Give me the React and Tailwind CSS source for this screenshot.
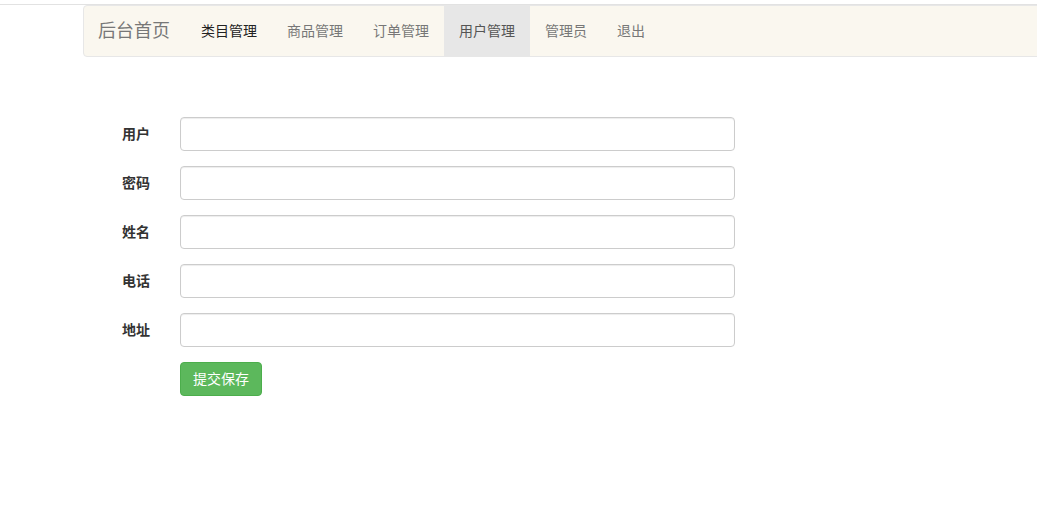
import React from "react";

const navItems = ["类目管理", "商品管理", "订单管理", "用户管理", "管理员", "退出"];
const fields = ["用户", "密码", "姓名", "电话", "地址"];

export default function App() {
  return (
    <div
      className="w-[1037px] h-[531px] overflow-hidden bg-white text-[14px] text-[#333]"
      style={{ fontFamily: '"Liberation Sans", "Noto Sans CJK SC", sans-serif' }}
    >
      {/* top rule */}
      <div className="h-[4px]" />
      <div className="h-px bg-[#e2e2e2]" />

      {/* navbar */}
      <nav className="ml-[83px] w-[1000px] h-[52px] flex border border-[#e7e7e7] rounded-l-[4px] bg-[#faf7ef]">
        <a className="pl-[14px] pr-[16px] h-full flex items-center text-[18px] text-[#777] leading-[20px]">
          后台首页
        </a>
        <ul className="flex h-full">
          {navItems.map((item, i) => (
            <li
              key={item}
              className={`px-[15px] h-full flex items-center leading-[20px] ${
                i === 3 ? "bg-[#e7e7e7] text-[#555]" : i === 0 ? "text-[#222]" : "text-[#777]"
              }`}
            >
              {item}
            </li>
          ))}
        </ul>
      </nav>

      {/* form */}
      <form className="mt-[60px] ml-[122px] flex flex-col gap-[15px]">
        {fields.map((label) => (
          <div key={label} className="flex items-center">
            <label className="w-[58px] font-bold leading-[20px] text-[#333]">{label}</label>
            <input
              type="text"
              className="w-[555px] h-[34px] border border-[#ccc] rounded-[4px] px-3 bg-white shadow-[inset_0_1px_1px_rgba(0,0,0,0.075)] outline-none"
            />
          </div>
        ))}
        <div className="flex pl-[58px]">
          <button
            type="button"
            className="w-[82px] h-[34px] rounded-[4px] border border-[#4cae4c] bg-[#5cb85c] text-white leading-[20px]"
          >
            提交保存
          </button>
        </div>
      </form>
    </div>
  );
}
